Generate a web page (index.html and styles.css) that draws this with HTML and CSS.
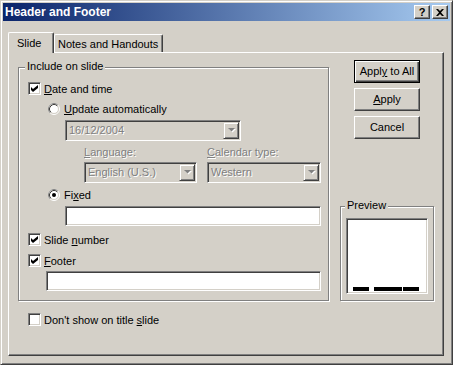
FILE: index.html
```html
<!DOCTYPE html>
<html lang="en">
<head>
    <meta charset="UTF-8">
    <title>Header and Footer</title>
    <link rel="stylesheet" href="styles.css">
</head>
<body>
    <div class="window">
        <div class="titlebar">
            <span class="title">Header and Footer</span>
            <div class="caption-buttons">
                <div class="cap-btn help">?</div>
                <div class="cap-btn">
                    <svg width="8" height="7" viewBox="0 0 8 7"><path d="M0 0h2l2 2 2-2h2L5 3.5 8 7H6L4 5 2 7H0l3-3.5z" fill="#000"/></svg>
                </div>
            </div>
        </div>

        <div class="dialog">
            <div class="tabs">
                <div class="tab active">Slide</div>
                <div class="tab">Notes and Handouts</div>
            </div>

            <div class="panel">
                <div class="left-col">
                    <div class="group include">
                        <span class="group-label">Include on slide</span>

                        <div class="row date-row">
                            <span class="checkbox checked">
                                <svg width="7" height="7" viewBox="0 0 7 7"><path d="M0 2l2 2 5-4v3L2 7 0 5z" fill="#000"/></svg>
                            </span>
                            <span><u>D</u>ate and time</span>
                        </div>

                        <div class="row radio-row update-row">
                            <svg class="radio" width="12" height="12" viewBox="0 0 12 12">
                                <circle cx="6" cy="6" r="5.5" fill="none" stroke="#fff"/>
                                <path d="M2.11 9.89A5.5 5.5 0 0 1 9.89 2.11" fill="none" stroke="#808080"/>
                                <circle cx="6" cy="6" r="4.5" fill="#fff" stroke="#d4d0c8"/>
                                <path d="M2.82 9.18A4.5 4.5 0 0 1 9.18 2.82" fill="none" stroke="#404040"/>
                            </svg>
                            <span><u>U</u>pdate automatically</span>
                        </div>

                        <div class="combo date-combo">
                            <span class="combo-text disabled">16/12/2004</span>
                            <span class="combo-btn">
                                <svg width="8" height="5" viewBox="0 0 8 5"><path d="M1 1h7L4.5 4.5z" fill="#fff"/><path d="M0 0h7L3.5 3.5z" fill="#808080"/></svg>
                            </span>
                        </div>

                        <div class="lang-labels">
                            <span class="lang-label disabled"><u>L</u>anguage:</span>
                            <span class="disabled"><u>C</u>alendar type:</span>
                        </div>

                        <div class="lang-combos">
                            <div class="combo english-combo">
                                <span class="combo-text disabled">English (U.S.)</span>
                                <span class="combo-btn">
                                    <svg width="8" height="5" viewBox="0 0 8 5"><path d="M1 1h7L4.5 4.5z" fill="#fff"/><path d="M0 0h7L3.5 3.5z" fill="#808080"/></svg>
                                </span>
                            </div>
                            <div class="combo western-combo">
                                <span class="combo-text disabled">Western</span>
                                <span class="combo-btn">
                                    <svg width="8" height="5" viewBox="0 0 8 5"><path d="M1 1h7L4.5 4.5z" fill="#fff"/><path d="M0 0h7L3.5 3.5z" fill="#808080"/></svg>
                                </span>
                            </div>
                        </div>

                        <div class="row radio-row fixed-row">
                            <svg class="radio" width="12" height="12" viewBox="0 0 12 12">
                                <circle cx="6" cy="6" r="5.5" fill="none" stroke="#fff"/>
                                <path d="M2.11 9.89A5.5 5.5 0 0 1 9.89 2.11" fill="none" stroke="#808080"/>
                                <circle cx="6" cy="6" r="4.5" fill="#fff" stroke="#d4d0c8"/>
                                <path d="M2.82 9.18A4.5 4.5 0 0 1 9.18 2.82" fill="none" stroke="#404040"/>
                                <circle cx="6" cy="6" r="2" fill="#000"/>
                            </svg>
                            <span>Fi<u>x</u>ed</span>
                        </div>

                        <div class="textbox fixed-box"></div>

                        <div class="row slide-row">
                            <span class="checkbox checked">
                                <svg width="7" height="7" viewBox="0 0 7 7"><path d="M0 2l2 2 5-4v3L2 7 0 5z" fill="#000"/></svg>
                            </span>
                            <span>Slide <u>n</u>umber</span>
                        </div>

                        <div class="row footer-row">
                            <span class="checkbox checked">
                                <svg width="7" height="7" viewBox="0 0 7 7"><path d="M0 2l2 2 5-4v3L2 7 0 5z" fill="#000"/></svg>
                            </span>
                            <span><u>F</u>ooter</span>
                        </div>

                        <div class="textbox footer-box"></div>
                    </div>

                    <div class="row title-row">
                        <span class="checkbox"></span>
                        <span>Don't show on title <u>s</u>lide</span>
                    </div>
                </div>

                <div class="right-col">
                    <div class="button default"><span>Appl<u>y</u> to All</span></div>
                    <div class="button"><span><u>A</u>pply</span></div>
                    <div class="button"><span>Cancel</span></div>

                    <div class="group preview">
                        <span class="group-label">Preview</span>
                        <div class="preview-box">
                            <span class="bar bar-left"></span>
                            <span class="bar bar-mid"></span>
                            <span class="bar bar-right"></span>
                        </div>
                    </div>
                </div>
            </div>
        </div>
    </div>
</body>
</html>
```

FILE: styles.css
```css
* {
    box-sizing: border-box;
}
body {
    margin: 0;
    font-family: "Liberation Sans", Arial, sans-serif;
    font-size: 11px;
    color: #000;
    background: #d4d0c8;
}
u {
    text-decoration-thickness: 1px;
    text-underline-offset: 1px;
}

/* window frame */
.window {
    width: 453px;
    height: 365px;
    padding: 2px;
    background: #d4d0c8;
    border: 1px solid;
    border-color: #d4d0c8 #404040 #404040 #d4d0c8;
    box-shadow: inset 1px 1px #fff, inset -1px -1px #808080;
}
.titlebar {
    height: 18px;
    display: flex;
    align-items: center;
    justify-content: space-between;
    padding: 0 2px;
    background: linear-gradient(to right, #0a246a, #a6caf0);
}
.title {
    color: #fff;
    font-weight: bold;
    font-size: 12px;
    line-height: 18px;
}
.caption-buttons {
    display: flex;
    gap: 2px;
}
.cap-btn {
    width: 16px;
    height: 14px;
    display: flex;
    align-items: center;
    justify-content: center;
    background: #d4d0c8;
    border: 1px solid;
    border-color: #fff #404040 #404040 #fff;
    box-shadow: inset -1px -1px #808080;
}
.help {
    font-weight: bold;
    font-size: 11px;
    line-height: 12px;
}

/* tabs */
.dialog {
    padding: 11px 5px 0;
}
.tabs {
    display: flex;
    align-items: flex-end;
    height: 20px;
}
.tab {
    height: 18px;
    padding: 3px 0 0 3px;
    line-height: 13px;
    background: #d4d0c8;
    border-top: 1px solid #fff;
    border-left: 1px solid #fff;
    border-right: 1px solid #404040;
    border-radius: 2px 2px 0 0;
    box-shadow: inset -1px 0 #808080;
}
.tab.active {
    position: relative;
    z-index: 1;
    width: 46px;
    height: 21px;
    margin-bottom: -1px;
    padding: 4px 0 0 8px;
}
.tab + .tab {
    width: 109px;
}

.panel {
    width: 436px;
    height: 304px;
    display: flex;
    gap: 11px;
    padding-left: 9px;
    border: 1px solid;
    border-color: #fff #404040 #404040 #fff;
    box-shadow: inset -1px -1px #808080;
}

/* group boxes */
.group {
    border: 1px solid #808080;
    box-shadow: inset 1px 1px #fff, 1px 1px #fff;
}
.group-label {
    display: table;
    margin: -8px 0 0 -3px;
    padding: 0 2px;
    line-height: 13px;
    background: #d4d0c8;
}
.include {
    width: 311px;
    margin-top: 14px;
    padding: 0 0 9px 9px;
}

/* rows */
.row {
    display: flex;
    align-items: center;
    gap: 3px;
    height: 13px;
    line-height: 12px;
}
.radio-row {
    height: 12px;
    gap: 4px;
    margin-left: 20px;
}
.date-row { margin-top: 9px; }
.update-row { margin-top: 8px; }
.fixed-row { margin-top: 6px; }
.slide-row { margin-top: 7px; }
.footer-row { margin-top: 8px; }
.title-row {
    margin: 12px 0 0 10px;
}

.checkbox {
    width: 13px;
    height: 13px;
    flex: none;
    display: flex;
    align-items: center;
    justify-content: center;
    background: #fff;
    border: 1px solid;
    border-color: #808080 #fff #fff #808080;
    box-shadow: inset 1px 1px #404040, inset -1px -1px #d4d0c8;
}
.radio {
    flex: none;
    display: block;
}

.disabled {
    color: #808080;
    text-shadow: 1px 1px 0 #fff;
}

/* combos and edit boxes */
.combo {
    display: flex;
    height: 21px;
    padding: 1px;
    background: #d4d0c8;
    border: 1px solid;
    border-color: #808080 #fff #fff #808080;
    box-shadow: inset 1px 1px #404040, inset -1px -1px #d4d0c8;
}
.combo-text {
    flex: 1;
    padding-left: 2px;
    line-height: 17px;
}
.combo-btn {
    width: 16px;
    height: 17px;
    display: flex;
    align-items: center;
    justify-content: center;
    padding-left: 1px;
    border: 1px solid;
    border-color: #d4d0c8 #404040 #404040 #d4d0c8;
    box-shadow: inset 1px 1px #fff, inset -1px -1px #808080;
}
.date-combo {
    width: 176px;
    margin: 5px 0 0 37px;
}
.lang-labels {
    display: flex;
    height: 13px;
    line-height: 13px;
    margin: 5px 0 0 56px;
}
.lang-label {
    width: 123px;
}
.lang-combos {
    display: flex;
    gap: 10px;
    margin: 3px 0 0 56px;
}
.english-combo { width: 113px; }
.western-combo { width: 114px; }

.textbox {
    height: 20px;
    background: #fff;
    border: 1px solid;
    border-color: #808080 #fff #fff #808080;
    box-shadow: inset 1px 1px #404040, inset -1px -1px #d4d0c8;
}
.fixed-box {
    width: 256px;
    margin: 5px 0 0 37px;
}
.footer-box {
    width: 275px;
    margin: 4px 0 0 18px;
}

/* right column */
.right-col {
    width: 94px;
    display: flex;
    flex-direction: column;
    align-items: center;
    padding-top: 7px;
}
.button {
    width: 66px;
    height: 23px;
    margin-bottom: 5px;
    display: flex;
    align-items: center;
    justify-content: center;
    line-height: 13px;
    border: 1px solid;
    border-color: #fff #404040 #404040 #fff;
    box-shadow: inset -1px -1px #808080;
}
.button.default {
    border-color: #000;
    box-shadow: inset 1px 1px #fff, inset -1px -1px #404040, inset -2px -2px #808080;
}

.preview {
    width: 94px;
    margin-top: 62px;
    padding: 0 0 6px 5px;
    align-self: stretch;
}
.preview .group-label {
    margin-left: -1px;
}
.preview-box {
    width: 82px;
    height: 76px;
    margin-top: 6px;
    display: flex;
    align-items: flex-end;
    padding: 0 0 2px 6px;
    background: #fff;
    border: 1px solid;
    border-color: #808080 #fff #fff #808080;
    box-shadow: inset 1px 1px #404040, inset -1px -1px #d4d0c8;
}
.bar {
    height: 4px;
    background: #000;
}
.bar-left { width: 16px; }
.bar-mid { width: 28px; margin-left: 5px; }
.bar-right { width: 16px; margin-left: 1px; }
```
